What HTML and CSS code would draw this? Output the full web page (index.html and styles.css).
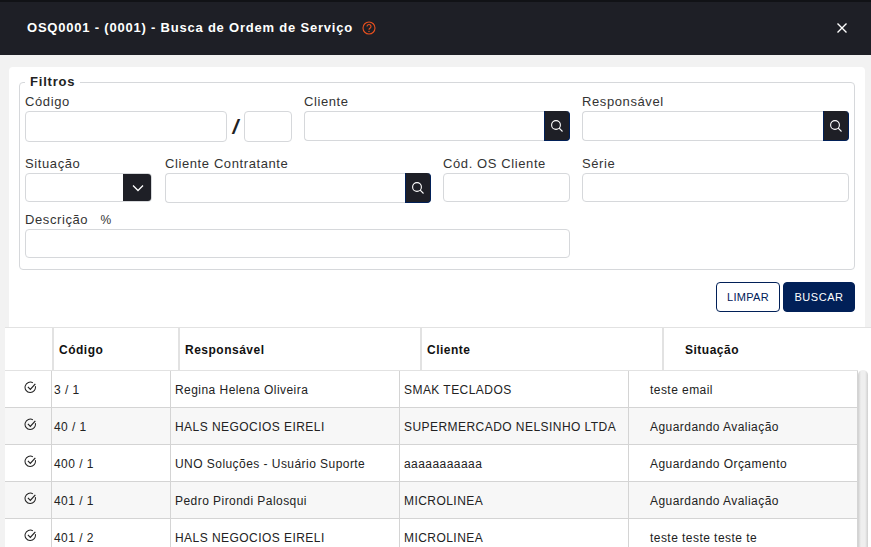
FILE: index.html
```html
<!DOCTYPE html>
<html lang="pt-BR">
<head>
    <meta charset="utf-8">
    <title>Busca de Ordem de Serviço</title>
    <link rel="stylesheet" href="styles.css">
</head>
<body>
    <header class="header">
        <h1>OSQ0001 - (0001) - Busca de Ordem de Serviço</h1>
        <svg class="help-icon" viewBox="0 0 14 14" width="14" height="14">
            <circle cx="7" cy="7" r="6" fill="none" stroke="#e8501f" stroke-width="1.1"/>
            <path d="M5 5.4a2 2 0 1 1 3 1.8c-.7.4-1 .8-1 1.5" fill="none" stroke="#e8501f" stroke-width="1.1"/>
            <circle cx="7" cy="10.4" r=".7" fill="#e8501f"/>
        </svg>
        <button class="close-btn">
            <svg viewBox="0 0 12 12" width="12" height="12">
                <path d="M1.5 1.5l9 9M10.5 1.5l-9 9" stroke="#fff" stroke-width="1.4" fill="none"/>
            </svg>
        </button>
    </header>

    <main class="content">
        <section class="card">
            <fieldset class="filters">
                <legend>Filtros</legend>
                <div class="filter-grid">
                    <div class="field span-2">
                        <label>Código</label>
                        <div class="code-row">
                            <input class="input input-tall" type="text">
                            <span class="slash">/</span>
                            <input class="input input-tall input-small" type="text">
                        </div>
                    </div>
                    <div class="field span-2">
                        <label>Cliente</label>
                        <div class="search-row">
                            <input class="input" type="text">
                            <button class="search-btn">
                                <svg viewBox="0 0 14 14" width="14" height="14"><circle cx="6" cy="6" r="4.4" fill="none" stroke="#fff" stroke-width="1.1"/><path d="M9.2 9.2l3.3 3.3" stroke="#fff" stroke-width="1.1"/></svg>
                            </button>
                        </div>
                    </div>
                    <div class="field span-2">
                        <label>Responsável</label>
                        <div class="search-row">
                            <input class="input" type="text">
                            <button class="search-btn">
                                <svg viewBox="0 0 14 14" width="14" height="14"><circle cx="6" cy="6" r="4.4" fill="none" stroke="#fff" stroke-width="1.1"/><path d="M9.2 9.2l3.3 3.3" stroke="#fff" stroke-width="1.1"/></svg>
                            </button>
                        </div>
                    </div>

                    <div class="field">
                        <label>Situação</label>
                        <div class="select-box">
                            <span class="select-arrow">
                                <svg viewBox="0 0 12 8" width="12" height="8"><path d="M1 1.5l5 5 5-5" stroke="#fff" stroke-width="1.3" fill="none"/></svg>
                            </span>
                        </div>
                    </div>
                    <div class="field span-2">
                        <label>Cliente Contratante</label>
                        <div class="search-row">
                            <input class="input" type="text">
                            <button class="search-btn">
                                <svg viewBox="0 0 14 14" width="14" height="14"><circle cx="6" cy="6" r="4.4" fill="none" stroke="#fff" stroke-width="1.1"/><path d="M9.2 9.2l3.3 3.3" stroke="#fff" stroke-width="1.1"/></svg>
                            </button>
                        </div>
                    </div>
                    <div class="field">
                        <label>Cód. OS Cliente</label>
                        <input class="input input-short" type="text">
                    </div>
                    <div class="field span-2">
                        <label>Série</label>
                        <input class="input input-short" type="text">
                    </div>

                    <div class="field span-4">
                        <label>Descrição <span class="percent">%</span></label>
                        <input class="input input-short" type="text">
                    </div>
                </div>
            </fieldset>
            <div class="actions">
                <button class="btn btn-outline">LIMPAR</button>
                <button class="btn btn-primary">BUSCAR</button>
            </div>
        </section>

        <section class="results">
            <table class="head-table">
                <thead>
                    <tr>
                        <th class="h-check"></th>
                        <th class="h-code">Código</th>
                        <th class="h-resp">Responsável</th>
                        <th class="h-client">Cliente</th>
                        <th class="h-status">Situação</th>
                    </tr>
                </thead>
            </table>
            <div class="body-wrap">
                <table class="body-table">
                    <tbody id="rows"></tbody>
                </table>
                <div class="scrollbar"><div class="scroll-thumb"></div></div>
            </div>
        </section>
    </main>

    <script>
        const rows = [
            ['3 / 1', 'Regina Helena Oliveira', 'SMAK TECLADOS', 'teste email'],
            ['40 / 1', 'HALS NEGOCIOS EIRELI', 'SUPERMERCADO NELSINHO LTDA', 'Aguardando Avaliação'],
            ['400 / 1', 'UNO Soluções - Usuário Suporte', 'aaaaaaaaaaa', 'Aguardando Orçamento'],
            ['401 / 1', 'Pedro Pirondi Palosqui', 'MICROLINEA', 'Aguardando Avaliação'],
            ['401 / 2', 'HALS NEGOCIOS EIRELI', 'MICROLINEA', 'teste teste teste te']
        ];
        const check = '<svg viewBox="0 0 14 14" width="13" height="13"><path d="M12.2 5.6A5.6 5.6 0 1 1 9.6 2" fill="none" stroke="#222" stroke-width="1.1"/><path d="M4.2 6.4l2.6 2.6 5.4-6" fill="none" stroke="#222" stroke-width="1.3"/></svg>';

        document.getElementById('rows').innerHTML = rows.map(r => `
            <tr>
                <td class="c-check">${check}</td>
                <td class="c-code">${r[0]}</td>
                <td class="c-resp">${r[1]}</td>
                <td class="c-client">${r[2]}</td>
                <td class="c-status">${r[3]}</td>
            </tr>`).join('');
    </script>
</body>
</html>
```

FILE: styles.css
```css
:root {
    --dark: #1e1f26;
    --navy: #012058;
    --line: #d6d8db;
    --cell-line: #d4d4d4;
}

html, body {
    height: 100%;
}

body {
    margin: 0;
    height: 547px;
    overflow: hidden;
    background: #f2f2f2;
    font-family: "Liberation Sans", Arial, sans-serif;
    color: #222;
}

.header {
    height: 51px;
    border-top: 2px solid #111216;
    background: var(--dark);
    display: flex;
    align-items: center;
    padding: 0 21px 2px 27px;
}

.header h1 {
    margin: 0;
    font-size: 13px;
    font-weight: bold;
    letter-spacing: 0.79px;
    color: #fff;
}

.help-icon {
    margin-left: 9px;
}

.close-btn {
    margin-left: auto;
    padding: 0;
    width: 16px;
    height: 16px;
    border: none;
    background: none;
    display: flex;
    align-items: center;
    justify-content: center;
}

.content {
    padding-top: 12px;
}

.card {
    margin: 0 6px 0 9px;
    height: 260px;
    background: #fff;
    border-radius: 4px 4px 0 0;
    padding: 9px 10px 0;
    box-sizing: border-box;
}

.filters {
    margin: 0;
    padding: 0 5px 11px;
    height: 194px;
    box-sizing: border-box;
    border: 1px solid var(--line);
    border-radius: 4px;
    min-width: 0;
}

.filters legend {
    padding: 0 5px;
    font-size: 13px;
    font-weight: bold;
    letter-spacing: 0.8px;
    line-height: 12px;
}

.filter-grid {
    display: grid;
    grid-template-columns: 128px repeat(3, 127px) 1fr 1fr;
    grid-template-rows: 62px 56px 48px;
    column-gap: 12px;
    margin-top: 4px;
}

.field {
    min-width: 0;
}

.field label {
    display: block;
    height: 19px;
    line-height: 19px;
    font-size: 13px;
    letter-spacing: 0.6px;
    color: #333;
}

.span-2 {
    grid-column: span 2;
}

.span-4 {
    grid-column: span 4;
}

.percent {
    margin-left: 8px;
    font-size: 12px;
    letter-spacing: 0;
}

.input {
    display: block;
    flex: 1;
    min-width: 0;
    width: 100%;
    height: 30px;
    padding: 0 8px;
    box-sizing: border-box;
    background: #fff;
    border: 1px solid var(--line);
    border-radius: 4px;
}

.input-tall {
    height: 31px;
}

.input-short {
    height: 29px;
}

.input-small {
    flex: 0 0 48px;
    width: 48px;
}

.code-row,
.search-row {
    display: flex;
}

.slash {
    flex: 0 0 17px;
    text-align: center;
    font-size: 21px;
    line-height: 31px;
    font-weight: bold;
    font-style: italic;
}

.search-row .input {
    border-radius: 4px 0 0 4px;
    border-right: none;
}

.search-btn {
    flex: 0 0 26px;
    height: 30px;
    padding: 0;
    background: var(--dark);
    border: none;
    border-right: 1px solid var(--navy);
    border-bottom: 1px solid var(--navy);
    border-left: 1px solid var(--navy);
    border-radius: 0 4px 4px 0;
    display: flex;
    align-items: center;
    justify-content: center;
}

.select-box {
    height: 29px;
    margin-right: 1px;
    box-sizing: border-box;
    border: 1px solid var(--line);
    border-radius: 4px;
    display: flex;
    justify-content: flex-end;
    overflow: hidden;
}

.select-arrow {
    width: 29px;
    margin: -1px;
    background: var(--dark);
    display: flex;
    align-items: center;
    justify-content: center;
}

.actions {
    display: flex;
    justify-content: flex-end;
    gap: 3px;
    margin-top: 12px;
}

.btn {
    height: 30px;
    padding: 0;
    font-family: inherit;
    font-size: 11px;
    letter-spacing: 0.3px;
    border-radius: 4px;
}

.btn-outline {
    width: 64px;
    background: #fff;
    border: 1px solid var(--navy);
    color: var(--navy);
}

.btn-primary {
    width: 72px;
    background: var(--navy);
    border: 1px solid var(--navy);
    color: #fff;
    letter-spacing: 0.55px;
}

.results {
    margin-left: 5px;
    background: #fff;
}

table {
    border-collapse: separate;
    border-spacing: 0;
    table-layout: fixed;
}

.head-table {
    width: 866px;
}

.head-table th {
    height: 44px;
    padding: 2px 0 0 5px;
    box-sizing: border-box;
    text-align: left;
    font-size: 12px;
    letter-spacing: 0.5px;
    color: #111;
    border-top: 1px solid #e2e2e2;
    border-bottom: 1px solid #e2e2e2;
    border-right: 2px solid #e2e2e2;
}

.head-table th:last-child {
    border-right: none;
    padding-left: 21px;
}

.h-check { width: 49px; }
.h-code { width: 126px; }
.h-resp { width: 242px; }
.h-client { width: 242px; }

.body-wrap {
    display: flex;
    align-items: flex-start;
}

.body-table {
    width: 853px;
    flex: 0 0 853px;
}

.body-table td {
    height: 37px;
    padding: 1px 0 0 4px;
    box-sizing: border-box;
    font-size: 12px;
    letter-spacing: 0.45px;
    color: #222;
    white-space: nowrap;
    border-bottom: 1px solid var(--cell-line);
    border-right: 1px solid var(--cell-line);
}

.body-table tr:nth-child(even) td {
    background: #f7f7f7;
}

.body-table td.c-check {
    padding: 0 0 5px 4px;
    text-align: center;
}

.c-check svg {
    display: inline-block;
    vertical-align: middle;
}

.c-check { width: 47px; }
.c-code { width: 119px; }
.c-resp { width: 229px; }
.c-client { width: 229px; }
.body-table td.c-code { padding-left: 2px; }
.body-table td.c-status { padding-left: 21px; }

.scrollbar {
    flex: 0 0 13px;
    height: 180px;
    margin-top: -1px;
    box-sizing: border-box;
    background: #fff;
}

.scroll-thumb {
    width: 10px;
    height: 180px;
    background: linear-gradient(90deg, #cfcfcf, #efefef 30%, #efefef 70%, #cfcfcf);
    border-radius: 5px 5px 0 0;
}
```
